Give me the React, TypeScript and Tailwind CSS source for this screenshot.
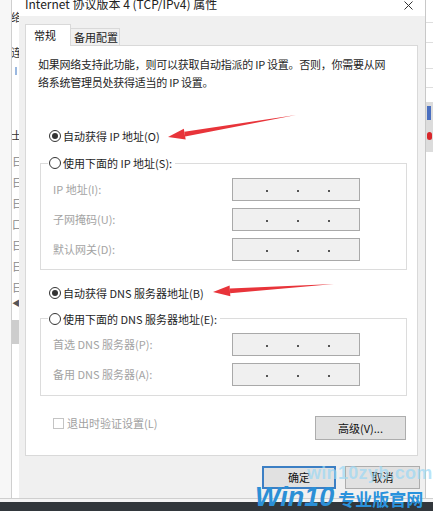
const CJK = "font-['Noto_Sans_CJK_SC','Noto_Sans',sans-serif]"

function Radio({ checked, label }: { checked?: boolean; label: string }) {
  return (
    <div className="flex h-[18px] items-center gap-[2px]">
      <span className="flex h-[12px] w-[12px] items-center justify-center rounded-full border border-[#333] bg-white">
        {checked && <span className="h-[6px] w-[6px] rounded-full bg-[#333]" />}
      </span>
      <span className="text-[11px] leading-[18px] text-[#1e1e1e]">{label}</span>
    </div>
  )
}

function IpBox() {
  return (
    <div className="flex h-[23px] w-[128px] items-center gap-[29px] border border-[#a9a9a9] bg-[#f0f0f0] pl-[33px] pt-[3px]">
      <span className="h-[2px] w-[2px] bg-[#555]" />
      <span className="h-[2px] w-[2px] bg-[#555]" />
      <span className="h-[2px] w-[2px] bg-[#555]" />
    </div>
  )
}

function Field({ label }: { label: string }) {
  return (
    <div className="flex h-[23px] items-center">
      <span className="w-[191px] pl-[12px] text-[11px] text-[#a3a3a3]">{label}</span>
      <IpBox />
    </div>
  )
}

function Arrow({ tip, tail }: { tip: [number, number]; tail: [number, number] }) {
  const [x1, y1] = tip
  const [x2, y2] = tail
  const dx = x2 - x1
  const dy = y2 - y1
  const len = Math.hypot(dx, dy)
  const ux = dx / len
  const uy = dy / len
  const nx = -uy
  const ny = ux
  const hb = 17
  const bx = x1 + ux * hb
  const by = y1 + uy * hb
  const head = `${x1},${y1} ${bx + nx * 5.5},${by + ny * 5.5} ${bx - nx * 5.5},${by - ny * 5.5}`
  const shaft = `${bx + nx * 2.5},${by + ny * 2.5} ${x2},${y2} ${bx - nx * 2.5},${by - ny * 2.5}`
  return (
    <g fill="#e8343a">
      <polygon points={head} />
      <polygon points={shaft} />
    </g>
  )
}

export default function App() {
  return (
    <div className={`relative h-[511px] w-[433px] overflow-hidden bg-white ${CJK}`}>
      <div className="flex h-[498px]">
        {/* background window, left */}
        <div className="w-[12px] border-r border-[#cfcfcf] bg-[#f7f7f7]" />
        <div className="flex w-[7px] flex-col overflow-hidden bg-white text-[11px] leading-[14px] text-[#333]">
          <span className="mt-[10px] -ml-[1px]">络</span>
          <span className="mt-[21px] -ml-[1px]">连</span>
          <span className="mt-[8px] ml-[3px] h-[8px] w-[2px] bg-[#9ab8e0]" />
          <span className="mt-[53px] -ml-[1px]">士</span>
          <div className="mt-[12px] flex flex-col gap-[7px] text-[#888]">
            <span>日</span>
            <span>日</span>
            <span>日</span>
            <span>口</span>
            <span>日</span>
            <span>日</span>
            <span>日</span>
          </div>
          <span className="mt-[2px] text-[8px] text-[#555]">◀</span>
          <span className="mt-[10px] h-[24px] w-[7px] bg-[#cdcdcd]" />
        </div>

        {/* dialog */}
        <div className="flex w-[407px] flex-col border-r border-[#c8c8c8] bg-[#f0f0f0]">
          <div className="flex h-[16px] items-start justify-between overflow-hidden bg-white pl-[6px] pr-[12px]">
            <span className="-mt-[4px] text-[12px] leading-[16px] text-[#222]">Internet 协议版本 4 (TCP/IPv4) 属性</span>
            <svg width="9" height="9" viewBox="0 0 9 9" className="mt-[1px]">
              <path d="M0.5 0.5 L8.5 8.5 M8.5 0.5 L0.5 8.5" stroke="#333" strokeWidth="1" />
            </svg>
          </div>

          <div className="flex flex-col pl-[6px] pr-[7px] pt-[8px]">
            <div className="flex items-end">
              <div className="relative z-10 -mb-[1px] flex h-[22px] w-[46px] items-center border-x border-t border-[#d9d9d9] bg-white pl-[8px] text-[11px] text-[#111]">
                常规
              </div>
              <div className="flex h-[17px] w-[49px] items-center border-r border-t border-[#d9d9d9] bg-[#f0f0f0] pl-[3px] text-[11px] text-[#222]">
                备用配置
              </div>
            </div>

            <div className="flex flex-col border border-[#d9d9d9] bg-white pb-[15px]">
              <p className="pl-[12px] pt-[9px] text-[11px] leading-[18px] tracking-[-0.25px] text-[#1e1e1e]">
                如果网络支持此功能，则可以获取自动指派的 IP 设置。否则，你需要从网
                <br />
                络系统管理员处获得适当的 IP 设置。
              </p>

              <div className="ml-[23px] mt-[36px]">
                <Radio checked label="自动获得 IP 地址(O)" />
              </div>

              <div className="ml-[14px] mr-[10px] mt-[18px] flex flex-col border border-[#dcdcdc] pb-[8px]">
                <div className="-mt-[10px] ml-[7px] w-fit bg-white pl-[1px] pr-[3px]">
                  <Radio label="使用下面的 IP 地址(S):" />
                </div>
                <div className="mt-[6px] flex flex-col gap-[7px]">
                  <Field label="IP 地址(I):" />
                  <Field label="子网掩码(U):" />
                  <Field label="默认网关(D):" />
                </div>
              </div>

              <div className="ml-[23px] mt-[14px]">
                <Radio checked label="自动获得 DNS 服务器地址(B)" />
              </div>

              <div className="ml-[14px] mr-[10px] mt-[16px] flex flex-col border border-[#dcdcdc] pb-[9px]">
                <div className="-mt-[9px] ml-[7px] w-fit bg-white pl-[1px] pr-[3px]">
                  <Radio label="使用下面的 DNS 服务器地址(E):" />
                </div>
                <div className="mt-[5px] flex flex-col gap-[7px]">
                  <Field label="首选 DNS 服务器(P):" />
                  <Field label="备用 DNS 服务器(A):" />
                </div>
              </div>

              <div className="mt-[20px] flex items-start justify-between pl-[27px] pr-[11px]">
                <div className="mt-[1px] flex items-center gap-[3px]">
                  <span className="h-[11px] w-[11px] border border-[#c4c4c4] bg-white" />
                  <span className="text-[11px] leading-[13px] text-[#a0a0a0]">退出时验证设置(L)</span>
                </div>
                <div className="flex h-[24px] w-[91px] items-center justify-center border border-[#adadad] bg-[#e1e1e1] text-[11px] text-[#111]">
                  高级(V)...
                </div>
              </div>
            </div>
          </div>

          <div className="mt-[10px] flex justify-end gap-[9px] pr-[5px]">
            <div className="flex h-[23px] w-[74px] items-center justify-center border-2 border-[#3c7fc4] bg-[#e1e1e1] text-[11px] text-[#111]">
              确定
            </div>
            <div className="flex h-[23px] w-[75px] items-center justify-center border border-[#adadad] bg-[#e1e1e1] text-[11px] text-[#111]">
              取消
            </div>
          </div>
        </div>

        {/* background window, right */}
        <div className="flex w-[7px] flex-col bg-white">
          <div className="mt-[22px] h-[1px] bg-[#dedede]" />
          <div className="mt-[19px] h-[1px] bg-[#dedede]" />
          <div className="mt-[25px] h-[1px] bg-[#dedede]" />
          <div className="mt-[18px] h-[1px] bg-[#dedede]" />
          <div className="mt-[14px] flex h-[50px] flex-col bg-[#dcdcdc] pl-[1px] pt-[4px]">
            <span className="h-[14px] w-[4px] bg-[#4a6fc0]" />
            <span className="mt-[12px] h-[8px] w-[5px] rounded-full bg-[#d8262a]" />
          </div>
        </div>
      </div>

      <div className="h-[1px] bg-[#cfcfcf]" />
      <div className="h-[3px] bg-[#f4f4f4]" />
      <div className="h-[9px] bg-[#32373c]" />

      {/* annotation arrows */}
      <svg className="pointer-events-none absolute left-0 top-0" width="433" height="511">
        <Arrow tip={[168, 137]} tail={[296, 115]} />
        <Arrow tip={[213, 292]} tail={[334, 284]} />
      </svg>

      {/* watermark */}
      <div className="pointer-events-none absolute left-[307px] top-[463px] whitespace-nowrap font-['Liberation_Sans',sans-serif] text-[18px] font-bold leading-[20px] tracking-[0.3px] text-[#9ad8f5]/70">
        win10zyb.com
      </div>
      <div className="pointer-events-none absolute left-[255px] top-[484px] flex w-max items-end whitespace-nowrap">
        <span className="font-['Liberation_Sans',sans-serif] text-[27px] font-bold italic leading-[26px] text-[#2b8fd6]">Win10</span>
        <span className="ml-[4px] text-[17px] font-bold leading-[22px] text-[#2a92dc]">专业版官网</span>
      </div>
    </div>
  )
}
